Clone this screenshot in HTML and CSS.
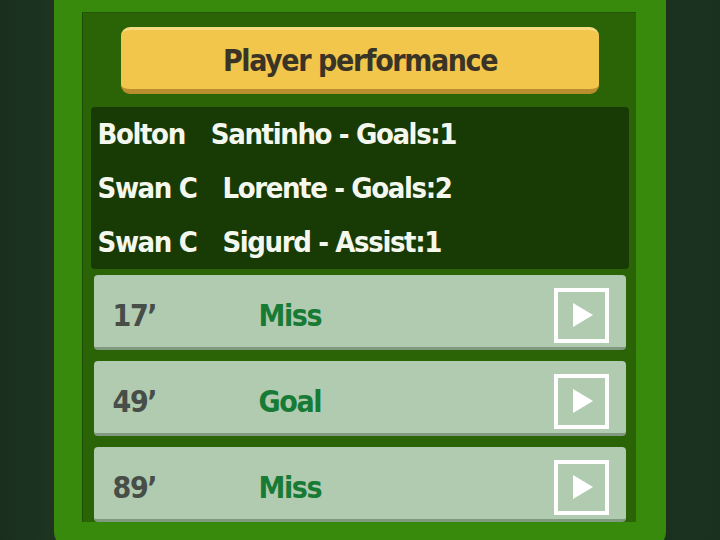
FILE: index.html
```html
<!DOCTYPE html>
<html>
<head>
<meta charset="utf-8">
<link rel="stylesheet" href="styles.css">
</head>
<body>
<div class="stage">
  <div class="frame">
    <div class="panel">
      <div class="title-btn">Player performance</div>
      <div class="summary">
        <div class="line"><span class="team">Bolton</span><span>Santinho - Goals:1</span></div>
        <div class="line"><span class="team">Swan C</span><span>Lorente - Goals:2</span></div>
        <div class="line"><span class="team">Swan C</span><span>Sigurd - Assist:1</span></div>
      </div>
      <div class="events">
        <div class="event">
          <span class="minute">17’</span>
          <span class="result">Miss</span>
          <span class="play"><svg viewBox="0 0 20 24" width="20" height="24"><path d="M0 0 L20 12 L0 24 Z" fill="#fff"/></svg></span>
        </div>
        <div class="event">
          <span class="minute">49’</span>
          <span class="result">Goal</span>
          <span class="play"><svg viewBox="0 0 20 24" width="20" height="24"><path d="M0 0 L20 12 L0 24 Z" fill="#fff"/></svg></span>
        </div>
        <div class="event">
          <span class="minute">89’</span>
          <span class="result">Miss</span>
          <span class="play"><svg viewBox="0 0 20 24" width="20" height="24"><path d="M0 0 L20 12 L0 24 Z" fill="#fff"/></svg></span>
        </div>
      </div>
    </div>
  </div>
</div>
</body>
</html>
```
FILE: styles.css
```css
html, body {
  margin: 0;
  padding: 0;
  width: 720px;
  height: 540px;
  overflow: hidden;
  background: #1b3120;
}
.stage {
  width: 720px;
  height: 540px;
  display: flex;
  justify-content: center;
  background: linear-gradient(90deg, #1a2e1d 0%, #1e3522 8%, #1b3120 100%);
}
.frame {
  width: 612px;
  height: 548px;
  background: #388a0d;
  border-radius: 0 0 16px 16px;
  padding: 12px 30px 0 28px;
  box-sizing: border-box;
}
.panel {
  height: 509px;
  background: #2b6407;
  border-left: 1px solid #1f4f06;
  border-top: 1px solid #24560a;
  display: flex;
  flex-direction: column;
  align-items: center;
  overflow: hidden;
  font-family: "DejaVu Sans Condensed", "DejaVu Sans", sans-serif;
  font-weight: bold;
  letter-spacing: -1.4px;
}
.title-btn {
  margin-top: 14px;
  width: 478px;
  height: 68px;
  box-sizing: border-box;
  background: #f2c64b;
  border-radius: 9px;
  border-top: 3px solid #f8dc84;
  border-bottom: 5px solid #b98e2d;
  display: flex;
  align-items: center;
  justify-content: center;
  color: #3a3426;
  font-size: 30px;
  padding-top: 2px;
  margin-left: 1px;
}
.summary {
  margin-top: 13px;
  width: 538px;
  height: 162px;
  box-sizing: border-box;
  background: #183a04;
  border-radius: 4px;
  padding-left: 7px;
  color: #f4f7ee;
  font-size: 29px;
}
.line {
  height: 54px;
  display: flex;
  align-items: center;
  gap: 26px;
}
.events {
  margin-top: 6px;
  width: 532px;
  display: flex;
  flex-direction: column;
  gap: 11px;
}
.event {
  height: 75px;
  box-sizing: border-box;
  background: #b1cbb1;
  border-radius: 4px;
  border-bottom: 3px solid #7f9a7f;
  display: flex;
  align-items: center;
  padding: 8px 17px 0 19px;
  font-size: 30px;
}
.minute {
  width: 146px;
  color: #474d47;
}
.result {
  flex: 1;
  color: #177a35;
}
.play {
  width: 55px;
  height: 55px;
  box-sizing: border-box;
  border: 4px solid #fff;
  display: flex;
  align-items: center;
  justify-content: center;
  padding-left: 3px;
}
```
